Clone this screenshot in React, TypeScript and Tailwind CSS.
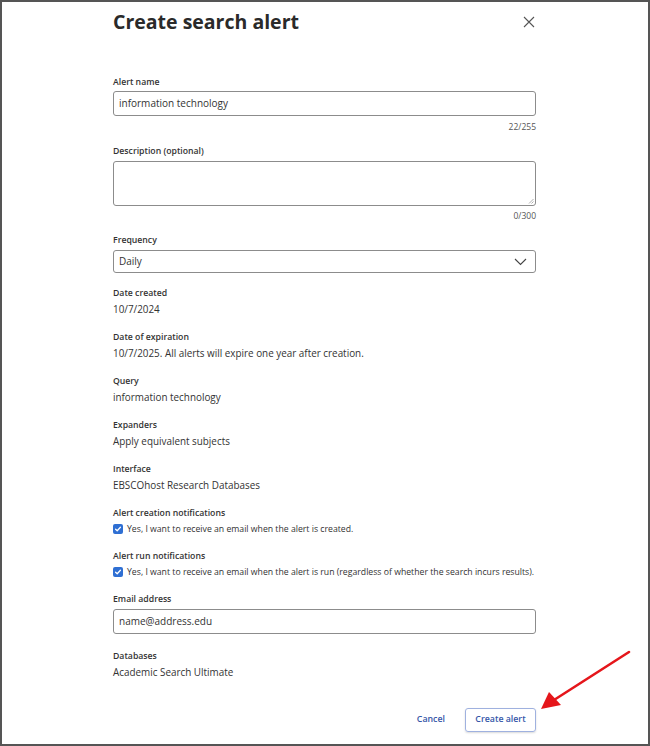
import React from 'react';

const font = { fontFamily: '"Open Sans", "Noto Sans", Arial, sans-serif' };

function Label({ children, className = '' }: { children: React.ReactNode; className?: string }) {
  return <div className={`text-[8.7px] leading-[14px] font-semibold text-[#333333] ${className}`}>{children}</div>;
}

function Value({ children }: { children: React.ReactNode }) {
  return <div className="mt-[1px] text-[9.9px] leading-[16px] text-[#333333]">{children}</div>;
}

function Field({ label, value }: { label: string; value: string }) {
  return (
    <div className="mt-[13px]">
      <Label>{label}</Label>
      <Value>{value}</Value>
    </div>
  );
}

function CheckRow({ label, text, className = '' }: { label: string; text: string; className?: string }) {
  return (
    <div className={className}>
      <Label>{label}</Label>
      <div className="mt-[1px] flex h-[16px] items-center gap-[4px]">
        <span className="flex h-[10px] w-[10px] shrink-0 items-center justify-center rounded-[2px] bg-[#2f6fd3]">
          <svg width="8" height="8" viewBox="0 0 8 8" fill="none">
            <path d="M1.6 4.2 L3.2 5.7 L6.4 2.3" stroke="white" strokeWidth="1.3" strokeLinecap="round" strokeLinejoin="round" />
          </svg>
        </span>
        <span className="whitespace-nowrap text-[8.7px] leading-[16px] text-[#333333]">{text}</span>
      </div>
    </div>
  );
}

function TextBox({ value, className = '' }: { value: string; className?: string }) {
  return (
    <div className={`flex h-[25px] items-center rounded-[3px] border border-[#8c8c8c] px-[5px] text-[10px] text-[#333333] ${className}`}>
      {value}
    </div>
  );
}

export default function App() {
  return (
    <div style={font} className="relative h-[746px] w-[650px] overflow-hidden border-2 border-[#555555] bg-white">
      <div className="ml-[111px] w-[423px]">
        <div className="flex items-center justify-between pt-[6px]">
          <h1 className="text-[19.5px] leading-[28px] font-bold text-[#2a2a2a]">Create search alert</h1>
          <svg width="12" height="12" viewBox="0 0 12 12" className="mr-[1px]" fill="none">
            <path d="M1 1 L11 11 M11 1 L1 11" stroke="#555555" strokeWidth="1.1" />
          </svg>
        </div>

        <Label className="mt-[39px]">Alert name</Label>
        <TextBox value="information technology" className="mt-[2px]" />
        <div className="mt-[5px] text-right text-[8.5px] leading-[12px] text-[#555555]">22/255</div>

        <Label className="mt-[11px]">Description (optional)</Label>
        <div className="relative mt-[3px] h-[45px] rounded-[3px] border border-[#8c8c8c]">
          <svg width="6" height="6" viewBox="0 0 6 6" className="absolute bottom-[1px] right-[1px]">
            <path d="M5.5 1 L1 5.5 M5.5 3.5 L3.5 5.5" stroke="#999999" strokeWidth="0.8" />
          </svg>
        </div>
        <div className="mt-[4px] text-right text-[8.5px] leading-[12px] text-[#555555]">0/300</div>

        <Label className="mt-[11px]">Frequency</Label>
        <div className="mt-[3px] flex h-[23px] items-center justify-between rounded-[3px] border border-[#8c8c8c] px-[5px] text-[10px] text-[#333333]">
          <span>Daily</span>
          <svg width="13" height="8" viewBox="0 0 13 8" fill="none" className="mr-[3px]">
            <path d="M1 1 L6.5 6.5 L12 1" stroke="#444444" strokeWidth="1.1" />
          </svg>
        </div>

        <div>
          <Field label="Date created" value="10/7/2024" />
        </div>
        <Field label="Date of expiration" value="10/7/2025. All alerts will expire one year after creation." />
        <Field label="Query" value="information technology" />
        <Field label="Expanders" value="Apply equivalent subjects" />
        <Field label="Interface" value="EBSCOhost Research Databases" />

        <CheckRow
          className="mt-[13px]"
          label="Alert creation notifications"
          text="Yes, I want to receive an email when the alert is created."
        />
        <CheckRow
          className="mt-[12px]"
          label="Alert run notifications"
          text="Yes, I want to receive an email when the alert is run (regardless of whether the search incurs results)."
        />

        <Label className="mt-[12px]">Email address</Label>
        <TextBox value="name@address.edu" className="mt-[3px]" />

        <div className="mt-[15px]">
          <Label>Databases</Label>
          <Value>Academic Search Ultimate</Value>
        </div>

        <div className="mt-[28px] flex items-center justify-end gap-[20px]">
          <button className="text-[8.8px] font-semibold text-[#3556a8]">Cancel</button>
          <button className="h-[24px] w-[71px] rounded-[3px] border border-[#9fb1df] text-[8.8px] font-semibold text-[#3556a8] shadow-[0_1px_2px_rgba(0,0,0,0.15)]">
            Create alert
          </button>
        </div>
      </div>

      <svg className="pointer-events-none absolute left-0 top-0" width="650" height="746" viewBox="0 0 650 746">
        <line x1="627" y1="650" x2="552" y2="698" stroke="#e5161b" strokeWidth="2.6" strokeLinecap="round" />
        <polygon points="539,707 547,690 559,703" fill="#e5161b" />
      </svg>
    </div>
  );
}
